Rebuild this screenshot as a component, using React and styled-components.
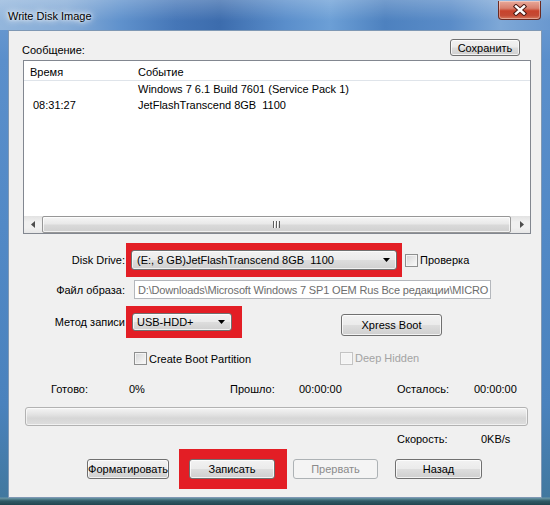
import React from 'react';
import styled, { createGlobalStyle } from 'styled-components';

const Global = createGlobalStyle`
  html, body { margin: 0; padding: 0; }
  body {
    width: 550px; height: 505px; overflow: hidden;
    font-family: "Liberation Sans", Arial, sans-serif;
    font-size: 11px; color: #000;
  }
  * { box-sizing: border-box; }
`;

const Window = styled.div`
  width: 550px;
  height: 505px;
  display: flex;
  flex-direction: column;
  background: linear-gradient(180deg,
    #6f9dd2 0px, #5b8fcb 60px, #5289c6 45%, #4a82bd 80%,
    #42789f calc(100% - 8px), #6b97a6 calc(100% - 7px), #2f5a66 calc(100% - 4px), #22454f 100%);
`;

const TitleBar = styled.div`
  height: 30px;
  flex: none;
  display: flex;
  align-items: flex-start;
  justify-content: space-between;
  padding: 0 9px 0 8px;
  background:
    linear-gradient(180deg, rgba(255,255,255,0.22), rgba(255,255,255,0) 70%),
    linear-gradient(90deg, #93b6dc 0%, #86acd7 12%, #5f91cc 22%, #4576b7 32%, #3c6cad 40%,
      #5a8ecb 52%, #6c9fd6 60%, #4d81bf 70%, #5a8cc8 82%, #7ea8d7 91%, #6a98cf 100%);
`;

const Title = styled.div`
  font-family: "Liberation Sans", Arial, sans-serif;
  font-size: 11px;
  line-height: 30px;
  padding: 1px 6px 0 0;
  color: #000;
  text-shadow: 0 0 6px rgba(255,255,255,0.95), 0 0 10px rgba(255,255,255,0.9), 0 0 3px rgba(255,255,255,0.9);
`;

const CloseButton = styled.div`
  margin-top: 1px;
  width: 43px;
  height: 19px;
  border: 1px solid #6b2a21;
  border-top: none;
  border-radius: 0 0 4px 4px;
  background: linear-gradient(180deg, #e9a99a 0%, #d8806e 40%, #c8432c 55%, #c44a34 80%, #d77a5e 100%);
  box-shadow: inset 0 0 0 1px rgba(255,255,255,0.35);
  display: flex;
  align-items: center;
  justify-content: center;
`;

const Client = styled.div`
  flex: 1;
  margin: 0 8px 7px 8px;
  background: #f0f0f0;
  border: 1px solid #7f98b4;
  display: flex;
  flex-direction: column;
`;

const HeaderRow = styled.div`
  height: 29px;
  flex: none;
  display: flex;
  align-items: flex-end;
  justify-content: space-between;
  padding: 8px 21px 4px 13px;
`;

const Label = styled.span`
  line-height: 13px;
  margin-bottom: ${p => p.$mb || 0}px;
  color: ${p => (p.$disabled ? '#a3a3a3' : '#000')};
  white-space: nowrap;
`;

const Button = styled.button`
  font-family: "Liberation Sans", Arial, sans-serif;
  font-size: 11px;
  width: ${p => p.$w}px;
  height: ${p => p.$h || 20}px;
  padding: 0;
  flex: none;
  border: 1px solid #707070;
  border-radius: 3px;
  background: linear-gradient(180deg, #f2f2f2 0%, #ebebeb 48%, #dddddd 52%, #cfcfcf 100%);
  box-shadow: inset 0 0 0 1px rgba(255,255,255,0.75);
  color: #000;
  display: flex;
  align-items: center;
  justify-content: center;
  overflow: hidden;
  white-space: nowrap;
  align-self: ${p => p.$self || 'auto'};
  margin-top: ${p => p.$mt || 0}px;
  margin-left: ${p => p.$ml || 0}px;
  &:disabled {
    border-color: #adb2b5;
    background: #f4f4f4;
    box-shadow: none;
    color: #8b8b8b;
  }
`;

const List = styled.div`
  flex: none;
  height: 174px;
  margin: 0 10px 0 14px;
  border: 1px solid #828790;
  background: #fff;
  display: flex;
  flex-direction: column;
`;

const ListHeader = styled.div`
  display: grid;
  grid-template-columns: 108px 1fr;
  height: 20px;
  padding-top: 2px;
  align-items: center;
  border-bottom: 1px solid #dfe4ea;
`;

const HeadCell = styled.div`
  padding-left: 6px;
`;

const ListRow = styled.div`
  display: grid;
  grid-template-columns: 108px 1fr;
  height: 16px;
  align-items: center;
`;

const Cell = styled.div`
  padding-left: ${p => p.$pl}px;
  white-space: nowrap;
`;

const ScrollBar = styled.div`
  margin-top: auto;
  height: 17px;
  display: flex;
  align-items: stretch;
  background: linear-gradient(180deg, #e2e2e2 0%, #f0f0f0 35%, #f0f0f0 70%, #e6e6e6 100%);
`;

const ScrollArrow = styled.div`
  width: 17px;
  flex: none;
  display: flex;
  align-items: center;
  justify-content: center;
`;

const Thumb = styled.div`
  flex: 1;
  margin: 0 2px 0 1px;
  border: 1px solid #979797;
  border-radius: 2px;
  background: linear-gradient(180deg, #f6f6f6 0%, #e9e9e9 45%, #d9d9d9 55%, #d0d0d0 100%);
  box-shadow: inset 0 0 0 1px rgba(255,255,255,0.7);
  display: flex;
  align-items: center;
  justify-content: center;
`;

const FormRow = styled.div`
  display: flex;
  align-items: ${p => p.$align || 'center'};
  margin-top: ${p => p.$mt}px;
  flex: none;
`;

const FieldLabel = styled.div`
  width: 117px;
  flex: none;
  text-align: right;
  padding-right: 1px;
  white-space: nowrap;
  align-self: center;
`;

const Highlight = styled.div`
  background: #e31e25;
  padding: ${p => p.$pad};
  display: flex;
  flex: none;
`;

const Combo = styled.div`
  width: ${p => p.$w}px;
  height: ${p => p.$h}px;
  border: 1px solid #707070;
  border-radius: 3px;
  background: linear-gradient(180deg, #f2f2f2 0%, #ebebeb 48%, #dddddd 52%, #cfcfcf 100%);
  box-shadow: inset 0 0 0 1px rgba(255,255,255,0.7);
  display: flex;
  align-items: center;
  justify-content: space-between;
  padding: 0 6px 0 ${p => p.$pl}px;
  white-space: nowrap;
`;

const TextBox = styled.div`
  margin-left: 8px;
  width: 357px;
  height: 19px;
  border: 1px solid #b4b7bc;
  background: #fff;
  color: #6d6d6d;
  padding-left: 3px;
  display: flex;
  align-items: center;
  overflow: hidden;
  white-space: nowrap;
  letter-spacing: -0.16px;
`;

const CheckItem = styled.label`
  display: flex;
  align-items: center;
  gap: 2px;
  width: ${p => (p.$w ? `${p.$w}px` : 'auto')};
  margin-left: ${p => p.$ml || 0}px;
  flex: none;
`;

const CheckBox = styled.span`
  width: 13px;
  height: 13px;
  flex: none;
  border: 1px solid ${p => (p.$disabled ? '#c4c4c4' : '#8e8f8f')};
  background: ${p => (p.$disabled
    ? '#f4f4f4'
    : 'linear-gradient(135deg, #d2d4d6 0%, #e8e8e8 50%, #fbfbfb 100%)')};
  box-shadow: inset 0 0 0 1px ${p => (p.$disabled ? '#f7f7f7' : '#f4f4f4')};
`;

const CheckRow = styled.div`
  display: flex;
  margin-top: 14px;
  padding-left: 125px;
  height: 13px;
  flex: none;
`;

const StatsRow = styled.div`
  display: grid;
  grid-template-columns: 78px 101px 69px 98px 77px auto;
  margin-top: 18px;
  padding-left: 42px;
  line-height: 13px;
  flex: none;
`;

const Progress = styled.div`
  margin: 11px 0 0 16px;
  width: 503px;
  height: 19px;
  flex: none;
  border: 1px solid #b2b2b2;
  border-radius: 3px;
  background: linear-gradient(180deg, #f4f4f4 0%, #e2e2e2 40%, #d6d6d6 60%, #dedede 100%);
  box-shadow: inset 0 0 0 1px rgba(255,255,255,0.6);
`;

const SpeedRow = styled.div`
  display: grid;
  grid-template-columns: 84px auto;
  margin-top: 7px;
  padding-left: 388px;
  line-height: 13px;
  flex: none;
`;

const ButtonRow = styled.div`
  display: flex;
  align-items: center;
  margin-top: 3px;
  padding-left: 78px;
  flex: none;
`;

const Gap = styled.div`
  width: ${p => p.$w}px;
  flex: none;
`;

const ComboArrow = () => (
  <svg width="7" height="4" viewBox="0 0 7 4"><path d="M0 0H7L3.5 4Z" fill="#000" /></svg>
);

const App = () => (
  <>
    <Global />
    <Window>
      <TitleBar>
        <Title>Write Disk Image</Title>
        <CloseButton>
          <svg width="14" height="12" viewBox="-7 -6 14 12">
            <path d="M-4 -3.5L4 3.5M4 -3.5L-4 3.5" stroke="#4a1a14" strokeWidth="4.4" strokeLinecap="square" />
            <path d="M-4 -3.5L4 3.5M4 -3.5L-4 3.5" stroke="#fff" strokeWidth="2.4" strokeLinecap="square" />
          </svg>
        </CloseButton>
      </TitleBar>
      <Client>
        <HeaderRow>
          <Label $mb={-1}>Сообщение:</Label>
          <Button $w={70} $h={17}>Сохранить</Button>
        </HeaderRow>
        <List>
          <ListHeader>
            <HeadCell>Время</HeadCell>
            <HeadCell>Событие</HeadCell>
          </ListHeader>
          <ListRow>
            <Cell $pl={9}></Cell>
            <Cell $pl={6}>Windows 7 6.1 Build 7601 (Service Pack 1)</Cell>
          </ListRow>
          <ListRow>
            <Cell $pl={9}>08:31:27</Cell>
            <Cell $pl={6}>JetFlashTranscend 8GB&nbsp;&nbsp;1100</Cell>
          </ListRow>
          <ScrollBar>
            <ScrollArrow>
              <svg width="4" height="7" viewBox="0 0 4 7"><path d="M4 0V7L0 3.5Z" fill="#4d4d4d" /></svg>
            </ScrollArrow>
            <Thumb>
              <svg width="7" height="7" viewBox="0 0 7 7">
                <rect x="0" y="0" width="1" height="7" fill="#5e5e5e" />
                <rect x="3" y="0" width="1" height="7" fill="#5e5e5e" />
                <rect x="6" y="0" width="1" height="7" fill="#5e5e5e" />
                <rect x="1" y="0" width="1" height="7" fill="#ffffff" />
                <rect x="4" y="0" width="1" height="7" fill="#ffffff" />
              </svg>
            </Thumb>
            <ScrollArrow>
              <svg width="4" height="7" viewBox="0 0 4 7"><path d="M0 0V7L4 3.5Z" fill="#4d4d4d" /></svg>
            </ScrollArrow>
          </ScrollBar>
        </List>

        <FormRow $mt={9}>
          <FieldLabel>Disk Drive:</FieldLabel>
          <Highlight $pad="7px 5px">
            <Combo $w={266} $h={20} $pl={5}>
              <span>(E:, 8 GB)JetFlashTranscend 8GB&nbsp;&nbsp;1100</span>
              <ComboArrow />
            </Combo>
          </Highlight>
          <CheckItem $ml={3}>
            <CheckBox />
            <span>Проверка</span>
          </CheckItem>
        </FormRow>

        <FormRow $mt={3}>
          <FieldLabel>Файл образа:</FieldLabel>
          <TextBox>D:\Downloads\Microsoft Windows 7 SP1 OEM Rus Все редакции\MICRO</TextBox>
        </FormRow>

        <FormRow $mt={7} $align="stretch">
          <FieldLabel>Метод записи</FieldLabel>
          <Highlight $pad="7px 10px 7px 6px">
            <Combo $w={100} $h={18} $pl={4}>
              <span>USB-HDD+</span>
              <ComboArrow />
            </Combo>
          </Highlight>
          <Button $w={101} $h={22} $self="flex-start" $mt={8} $ml={99}>Xpress Boot</Button>
        </FormRow>

        <CheckRow>
          <CheckItem $w={206}>
            <CheckBox />
            <span>Create Boot Partition</span>
          </CheckItem>
          <CheckItem>
            <CheckBox $disabled />
            <Label $disabled>Deep Hidden</Label>
          </CheckItem>
        </CheckRow>

        <StatsRow>
          <span>Готово:</span>
          <span>0%</span>
          <span>Прошло:</span>
          <span>00:00:00</span>
          <span>Осталось:</span>
          <span>00:00:00</span>
        </StatsRow>

        <Progress />

        <SpeedRow>
          <span>Скорость:</span>
          <span>0KB/s</span>
        </SpeedRow>

        <ButtonRow>
          <Button $w={82}>Форматировать</Button>
          <Gap $w={10} />
          <Highlight $pad="10px 12px 10px 10px">
            <Button $w={86}>Записать</Button>
          </Highlight>
          <Gap $w={6} />
          <Button $w={85} disabled>Прервать</Button>
          <Gap $w={17} />
          <Button $w={87}>Назад</Button>
        </ButtonRow>
      </Client>
    </Window>
  </>
);

export default App;
